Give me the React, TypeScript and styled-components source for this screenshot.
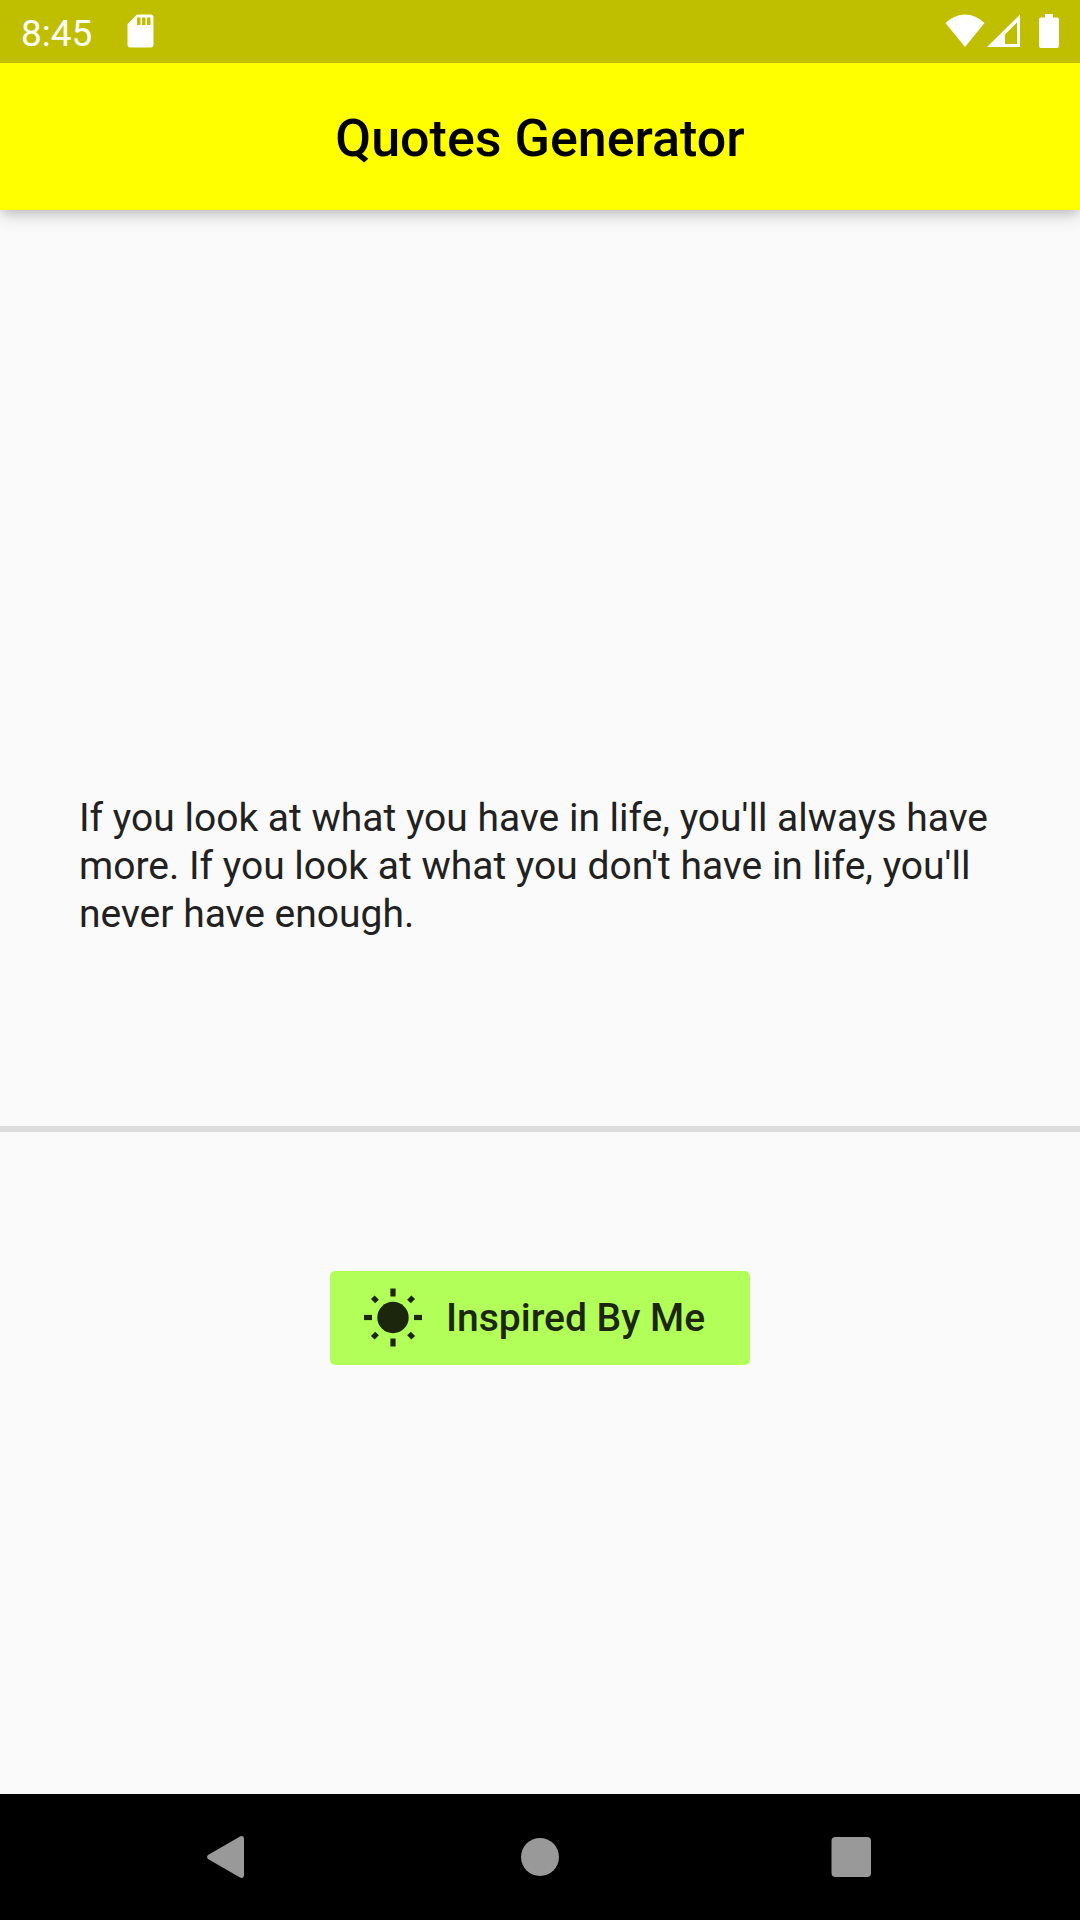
import React, { useState } from "react";
import styled, { createGlobalStyle } from "styled-components";

const GlobalStyle = createGlobalStyle`
  * { box-sizing: border-box; }
  body {
    margin: 0;
    background: #fafafa;
    font-family: Roboto, "Noto Sans", sans-serif;
  }
`;

const Screen = styled.div`
  display: flex;
  flex-direction: column;
  min-height: 100vh;
`;

const StatusBar = styled.div`
  position: relative;
  z-index: 1;
  display: flex;
  align-items: center;
  justify-content: space-between;
  height: 63px;
  padding: 0 21px 1px;
  background: #bfbf00;
  color: #fff;
`;

const StatusGroup = styled.div<{ $gap: number }>`
  display: flex;
  align-items: center;
  gap: ${(p) => p.$gap}px;
`;

const Clock = styled.time`
  font-size: 37px;
  line-height: 44px;
  padding-top: 6px;
`;

const AppBar = styled.header`
  display: flex;
  align-items: center;
  justify-content: center;
  height: 147px;
  padding-top: 5px;
  background: #ffff00;
  box-shadow:
    0 5px 10px -3px rgba(0, 0, 0, 0.12),
    0 6px 16px rgba(0, 0, 0, 0.16);
`;

const Title = styled.h1`
  margin: 0;
  color: #000;
  font-size: 52px;
  font-weight: 500;
  line-height: 62px;
`;

const Main = styled.main`
  flex: 1;
  display: flex;
  flex-direction: column;
  align-items: center;
  justify-content: center;
  padding-top: 154px;
`;

const Quote = styled.p`
  align-self: stretch;
  margin: 0 79px 188px;
  color: #212121;
  font-size: 39px;
  line-height: 48px;
`;

const Divider = styled.hr`
  align-self: stretch;
  height: 6px;
  margin: 0 0 139px;
  border: 0;
  background: #dcdcdc;
`;

const InspireButton = styled.button`
  display: flex;
  align-items: center;
  gap: 23px;
  height: 94px;
  padding: 0 45px 0 33px;
  border: 0;
  border-radius: 5px;
  background: #b2ff59;
  color: #1b260d;
  font-family: inherit;
  font-size: 39px;
  font-weight: 500;
  line-height: 48px;
  cursor: pointer;
`;

const NavBar = styled.nav`
  display: grid;
  grid-template-columns: repeat(3, 1fr);
  height: 126px;
  padding: 0 72px;
  background: #000;
`;

const NavButton = styled.button`
  display: flex;
  align-items: center;
  justify-content: center;
  padding: 0;
  border: 0;
  background: none;
  color: #999;
  cursor: pointer;
`;

const SdCardIcon = () => (
  <svg width="27" height="34" viewBox="0 0 27 34" fill="currentColor" aria-hidden="true">
    <path
      fillRule="evenodd"
      d="M10 .5H23.500a3 3 0 0 1 3 3V30.500a3 3 0 0 1-3 3H3.500a3 3 0 0 1-3-3V10zM10 3.500V11h3.500V3.500zM15 3.500V11h3.500V3.500zM20 3.500V11h3.500V3.500z"
    />
  </svg>
);

const WifiIcon = () => (
  <svg width="40" height="34" viewBox="0 0 40 34" fill="currentColor" aria-hidden="true">
    <path d="M.5 9Q9 .5 20 .5T39.500 9L20 33z" />
  </svg>
);

const CellIcon = () => (
  <svg width="33" height="34" viewBox="0 0 33 34" fill="currentColor" aria-hidden="true">
    <path fillRule="evenodd" d="M33 .5V33H0zM30 8.500L18 20.500V30H30z" />
  </svg>
);

const BatteryIcon = () => (
  <svg width="20" height="34" viewBox="0 0 20 34" fill="currentColor" aria-hidden="true">
    <path d="M6 0h8v3.500h4a2 2 0 0 1 2 2V32a2 2 0 0 1-2 2H2a2 2 0 0 1-2-2V5.500a2 2 0 0 1 2-2h4z" />
  </svg>
);

const SunIcon = () => (
  <svg width="60" height="60" viewBox="-30 -29.500 60 60" fill="currentColor" aria-hidden="true">
    <circle r="15.7" />
    {[0, 90, 180, 270].map((angle) => (
      <rect key={angle} x="-2.6" y="-29" width="5.2" height="8" transform={`rotate(${angle})`} />
    ))}
    {[45, 135, 225, 315].map((angle) => (
      <rect key={angle} x="-2.6" y="-28.6" width="5.2" height="6" transform={`rotate(${angle})`} />
    ))}
  </svg>
);

const BackIcon = () => (
  <svg width="42" height="42" viewBox="0 0 42 42" fill="currentColor" aria-hidden="true">
    <path d="M1 19L33 .4Q37 -.8 37 3V39Q37 42.800 33 41.600L1 23Q-.8 21 1 19z" />
  </svg>
);

const HomeIcon = () => (
  <svg width="42" height="42" viewBox="0 0 42 42" fill="currentColor" aria-hidden="true">
    <circle cx="21" cy="21" r="19" />
  </svg>
);

const RecentsIcon = () => (
  <svg width="42" height="42" viewBox="0 0 42 42" fill="currentColor" aria-hidden="true">
    <rect x="0.500" y="1" width="39.500" height="40" rx="4" />
  </svg>
);

const quotes = [
  "If you look at what you have in life, you'll always have more. If you look at what you don't have in life, you'll never have enough.",
];

export default function App() {
  const [index, setIndex] = useState(0);

  return (
    <Screen>
      <GlobalStyle />
      <StatusBar>
        <StatusGroup $gap={35}>
          <Clock>8:45</Clock>
          <SdCardIcon />
        </StatusGroup>
        <StatusGroup $gap={19}>
          <StatusGroup $gap={2}>
            <WifiIcon />
            <CellIcon />
          </StatusGroup>
          <BatteryIcon />
        </StatusGroup>
      </StatusBar>
      <AppBar>
        <Title>Quotes Generator</Title>
      </AppBar>
      <Main>
        <Quote>{quotes[index]}</Quote>
        <Divider />
        <InspireButton type="button" onClick={() => setIndex((index + 1) % quotes.length)}>
          <SunIcon />
          Inspired By Me
        </InspireButton>
      </Main>
      <NavBar aria-label="System">
        <NavButton type="button" aria-label="Back">
          <BackIcon />
        </NavButton>
        <NavButton type="button" aria-label="Home">
          <HomeIcon />
        </NavButton>
        <NavButton type="button" aria-label="Recent apps">
          <RecentsIcon />
        </NavButton>
      </NavBar>
    </Screen>
  );
}
